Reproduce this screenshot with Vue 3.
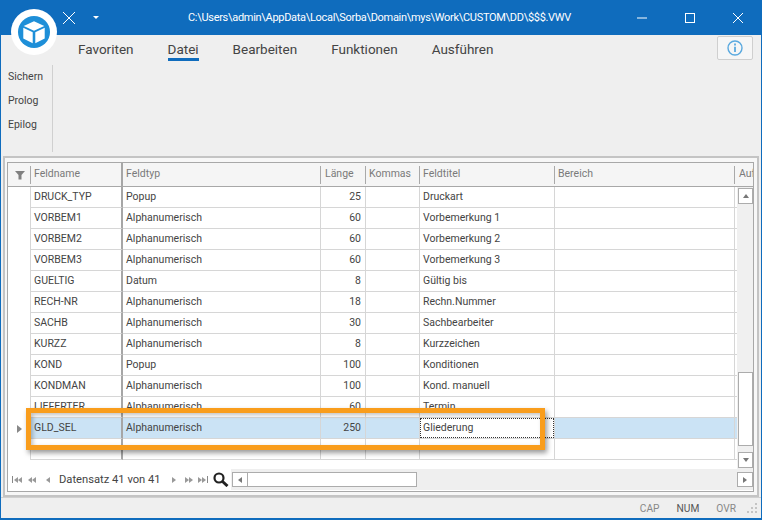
<script setup>
const columns = [
  { key: 'name', label: 'Feldname' },
  { key: 'type', label: 'Feldtyp' },
  { key: 'len', label: 'Länge' },
  { key: 'dec', label: 'Kommas' },
  { key: 'title', label: 'Feldtitel' },
  { key: 'range', label: 'Bereich' },
]

const rows = [
  { name: 'DRUCK_TYP', type: 'Popup', len: 25, title: 'Druckart' },
  { name: 'VORBEM1', type: 'Alphanumerisch', len: 60, title: 'Vorbemerkung 1' },
  { name: 'VORBEM2', type: 'Alphanumerisch', len: 60, title: 'Vorbemerkung 2' },
  { name: 'VORBEM3', type: 'Alphanumerisch', len: 60, title: 'Vorbemerkung 3' },
  { name: 'GUELTIG', type: 'Datum', len: 8, title: 'Gültig bis' },
  { name: 'RECH-NR', type: 'Alphanumerisch', len: 18, title: 'Rechn.Nummer' },
  { name: 'SACHB', type: 'Alphanumerisch', len: 30, title: 'Sachbearbeiter' },
  { name: 'KURZZ', type: 'Alphanumerisch', len: 8, title: 'Kurzzeichen' },
  { name: 'KOND', type: 'Popup', len: 100, title: 'Konditionen' },
  { name: 'KONDMAN', type: 'Alphanumerisch', len: 100, title: 'Kond. manuell' },
  { name: 'LIEFERTER', type: 'Alphanumerisch', len: 60, title: 'Termin' },
  { name: 'GLD_SEL', type: 'Alphanumerisch', len: 250, title: 'Gliederung', selected: true },
  { name: '', type: '', len: '', title: '' },
]

const tabs = ['Favoriten', 'Datei', 'Bearbeiten', 'Funktionen', 'Ausführen']
const sideActions = ['Sichern', 'Prolog', 'Epilog']
</script>

<template>
  <div class="window">
    <header class="titlebar">
      <div class="quick">
        <svg width="14" height="14" viewBox="0 0 14 14">
          <path d="M1 1l12 12M13 1L1 13" stroke="#fff" stroke-width="1" fill="none" />
        </svg>
        <span class="quick-caret"></span>
      </div>
      <div class="path">C:\Users\admin\AppData\Local\Sorba\Domain\mys\Work\CUSTOM\DD\$$$.VWV</div>
      <div class="controls">
        <svg width="10" height="2" viewBox="0 0 10 2"><path d="M0 1h10" stroke="#fff" /></svg>
        <svg width="10" height="10" viewBox="0 0 10 10"><rect x=".5" y=".5" width="9" height="9" fill="none" stroke="#fff" /></svg>
        <svg width="10" height="10" viewBox="0 0 10 10"><path d="M0 0l10 10M10 0L0 10" stroke="#fff" /></svg>
      </div>
    </header>

    <div class="logo">
      <div class="logo-disc">
        <svg width="24" height="24" viewBox="0 0 28 28">
          <path d="M14 1.500L26 7 14 12.500 2 7z" fill="#fff" />
          <path d="M1.500 9l11 5.200V27L1.500 21.500zM26.500 9l-11 5.200V27l11-5.500z" fill="#fff" />
        </svg>
      </div>
    </div>

    <section class="ribbon">
      <nav class="tabs">
        <span v-for="tab in tabs" :key="tab" class="tab" :class="{ active: tab === 'Datei' }">{{ tab }}</span>
        <button class="info">
          <svg width="16" height="16" viewBox="0 0 16 16">
            <circle cx="8" cy="8" r="7" fill="none" stroke="#5aa9df" stroke-width="1.400" />
            <path d="M8 3.500v2M8 6.800v5.200" stroke="#5aa9df" stroke-width="1.800" />
          </svg>
        </button>
      </nav>
      <div class="panel">
        <div class="actions">
          <span v-for="action in sideActions" :key="action">{{ action }}</span>
        </div>
      </div>
    </section>

    <main class="frame">
      <div class="frame-inner">
        <div class="grid-row grid-head">
          <div class="cell indicator">
            <svg width="10" height="10" viewBox="0 0 10 10"><path d="M0 1h10L6.500 5v4.500h-3V5z" fill="#808080" /></svg>
          </div>
          <div v-for="col in columns" :key="col.key" class="cell" :class="col.key">{{ col.label }}</div>
          <div class="cell auto">Auf</div>
        </div>

        <div class="body">
          <div class="rows">
            <div v-for="(row, i) in rows" :key="i" class="grid-row" :class="{ selected: row.selected }">
              <div class="cell indicator"><span v-if="row.selected" class="row-mark"></span></div>
              <div class="cell name">{{ row.name }}</div>
              <div class="cell type">{{ row.type }}</div>
              <div class="cell len">{{ row.len }}</div>
              <div class="cell dec"></div>
              <div class="cell title"><span :class="{ focused: row.selected }">{{ row.title }}</span></div>
              <div class="cell range"></div>
              <div class="cell rest"></div>
            </div>
          </div>
          <div class="vscroll">
            <span class="sbtn"><i class="arrow up"></i></span>
            <div class="vtrack"><div class="vthumb"></div></div>
            <span class="sbtn"><i class="arrow down"></i></span>
          </div>
        </div>

        <div class="foot">
          <div class="pager">
            <span class="pg"><b></b><i class="arrow left"></i><i class="arrow left"></i></span>
            <span class="pg"><i class="arrow left"></i><i class="arrow left"></i></span>
            <span class="pg"><i class="arrow left"></i></span>
            <span class="record">Datensatz 41 von 41</span>
            <span class="pg next"><i class="arrow right"></i></span>
            <span class="pg next"><i class="arrow right"></i><i class="arrow right"></i></span>
            <span class="pg next"><i class="arrow right"></i><i class="arrow right"></i><b></b></span>
            <svg class="lens" width="16" height="15" viewBox="0 0 16 15">
              <circle cx="6" cy="6" r="4.500" fill="none" stroke="#222" stroke-width="2.200" />
              <path d="M9.500 9.500l5 4.500" stroke="#222" stroke-width="3" />
            </svg>
          </div>
          <div class="hscroll">
            <span class="sbtn wide"><i class="arrow left"></i></span>
            <div class="hthumb"></div>
            <div class="htrack"></div>
            <span class="sbtn wide"><i class="arrow right"></i></span>
          </div>
        </div>

        <div class="callout"></div>
      </div>
    </main>

    <footer class="status">
      <span>CAP</span>
      <span class="on">NUM</span>
      <span>OVR</span>
      <svg class="grip" width="10" height="10" viewBox="0 0 10 10">
        <path d="M8 0h2v2H8zM4 4h2v2H4zM8 4h2v2H8zM0 8h2v2H0zM4 8h2v2H4zM8 8h2v2H8z" fill="#c4c4c4" />
      </svg>
    </footer>
  </div>
</template>

<style>
html, body { margin: 0; background: #efefef; }
</style>

<style scoped>
.window {
  position: relative;
  width: 762px;
  height: 520px;
  box-sizing: border-box;
  display: flex;
  flex-direction: column;
  background: #efefef;
  border: 1px solid #0f6cbd;
  border-top: 0;
  border-bottom-width: 2px;
  font-family: Roboto, "Open Sans", sans-serif;
  color: #444;
  overflow: hidden;
}

.titlebar {
  flex: none;
  height: 35px;
  margin: 0 -1px;
  display: flex;
  align-items: center;
  background: #0f6cbd;
  color: #fff;
}
.quick {
  width: 188px;
  padding-left: 62px;
  box-sizing: border-box;
  display: flex;
  align-items: center;
  gap: 17px;
}
.quick-caret {
  width: 0;
  height: 0;
  border: 3px solid transparent;
  border-top: 3px solid #fff;
  margin-top: 3px;
}
.path {
  font-size: 11px;
  letter-spacing: -0.3px;
  white-space: nowrap;
}
.controls {
  margin-left: auto;
  display: flex;
  align-items: center;
  gap: 38px;
  padding-right: 19px;
}

.logo {
  position: absolute;
  left: 10px;
  top: 9px;
  width: 46px;
  height: 46px;
  border-radius: 50%;
  background: #fff;
  display: flex;
  align-items: center;
  justify-content: center;
}
.logo-disc {
  width: 32px;
  height: 32px;
  border-radius: 50%;
  background: #1e8fd8;
  display: flex;
  align-items: center;
  justify-content: center;
}

.ribbon {
  flex: none;
  height: 121px;
}
.tabs {
  height: 30px;
  box-sizing: border-box;
  display: flex;
  align-items: flex-start;
  gap: 34px;
  padding: 5px 0 0 77px;
  font-size: 13.500px;
}
.tab {
  height: 21px;
  box-sizing: border-box;
  line-height: 19px;
}
.tab.active { border-bottom: 3px solid #0f6cbd; }
.info {
  margin: -4px 8px 0 auto;
  width: 36px;
  height: 24px;
  padding: 0;
  display: flex;
  align-items: center;
  justify-content: center;
  background: #f6f6f6;
  border: 1px solid #cfcfcf;
  border-radius: 2px;
}
.panel {
  width: 52px;
  height: 87px;
  box-sizing: border-box;
  border-right: 1px solid #d0d0d0;
}
.actions {
  display: flex;
  flex-direction: column;
  gap: 6px;
  padding: 3px 0 0 7px;
  font-size: 10.500px;
  line-height: 18px;
}

.frame {
  flex: none;
  height: 341px;
  width: 756px;
  margin-left: 2px;
  padding: 4px 3px 3px 2px;
  box-sizing: border-box;
  border: 2px solid #c4c4c4;
  background: #f7f7f7;
}
.frame-inner {
  position: relative;
  height: 100%;
  box-sizing: border-box;
  border: 1px solid #a8a8a8;
  background: #fff;
  display: flex;
  flex-direction: column;
  font-size: 10.500px;
}

.grid-row {
  display: grid;
  grid-template-columns: 23px 92px 198px 45px 54px 135px 180px 2px;
  height: 21px;
}
.cell {
  box-sizing: border-box;
  padding: 0 3px;
  line-height: 20px;
  border-right: 1px solid #d6d6d6;
  border-bottom: 1px solid #d6d6d6;
  white-space: nowrap;
  overflow: hidden;
}
.cell.indicator {
  padding: 0;
  display: flex;
  align-items: center;
  justify-content: center;
  border-bottom: 0;
}
.cell.name { border-right: 2px solid #a6a6a6; }
.cell.len {
  text-align: right;
  padding-right: 4px;
}
.cell.rest {
  padding: 0;
  border-right: 0;
}

.grid-head {
  flex: none;
  height: 23px;
  grid-template-columns: 23px 92px 198px 45px 54px 135px 180px 1fr;
  background: #f5f5f5;
  color: #7a7a7a;
  border-bottom: 1px solid #a8a8a8;
}
.grid-head .cell {
  border-bottom: 0;
  border-right: 0;
  line-height: 22px;
  background: linear-gradient(#a9a9a9, #a9a9a9) right center / 1px 18px no-repeat;
}
.grid-head .cell.name {
  background: none;
  border-right: 2px solid #a6a6a6;
}
.grid-head .cell.len {
  text-align: left;
  padding-left: 4px;
}
.grid-head .cell.auto {
  background: none;
  padding-left: 4px;
}

.body {
  flex: none;
  height: 282px;
  display: flex;
}
.rows {
  width: 729px;
  flex: none;
}

.selected .cell:not(.indicator) { background: #cbe3f5; }
.selected .cell.title { padding: 0; }
.focused {
  display: block;
  height: 20px;
  padding-left: 3px;
  background: #fff;
  outline: 1px dotted #333;
  outline-offset: -1px;
}
.row-mark {
  width: 0;
  height: 0;
  border: 4px solid transparent;
  border-left: 5px solid #888;
  border-right: 0;
}

.vscroll {
  width: 16px;
  flex: none;
  padding: 1px 0 1px 1px;
  box-sizing: border-box;
  display: flex;
  flex-direction: column;
  background: #f0f0f0;
}
.sbtn {
  flex: none;
  box-sizing: border-box;
  width: 15px;
  height: 16px;
  background: #fff;
  border: 1px solid #acacac;
  display: flex;
  align-items: center;
  justify-content: center;
}
.sbtn.wide {
  width: 16px;
  height: 15px;
}
.vtrack {
  flex: 1;
  display: flex;
  flex-direction: column;
  justify-content: flex-end;
  padding-bottom: 6px;
}
.vthumb {
  width: 15px;
  height: 74px;
  box-sizing: border-box;
  background: #fff;
  border: 1px solid #acacac;
}

.arrow {
  display: block;
  width: 0;
  height: 0;
  border: 3px solid transparent;
}
.arrow.up { border-bottom: 4px solid #777; border-top: 0; }
.arrow.down { border-top: 4px solid #777; border-bottom: 0; }
.arrow.left { border-right: 4px solid #777; border-left: 0; }
.arrow.right { border-left: 4px solid #777; border-right: 0; }

.foot {
  flex: none;
  height: 23px;
  display: flex;
  align-items: flex-start;
}
.pager {
  width: 223px;
  height: 21px;
  flex: none;
  display: flex;
  align-items: center;
  box-sizing: border-box;
}
.pg {
  display: flex;
  align-items: center;
  justify-content: center;
  width: 16px;
}
.pg.next { width: 15px; }
.pg .arrow {
  border-top-width: 3.500px;
  border-bottom-width: 3.500px;
}
.pg .arrow.left { border-right-color: #999; }
.pg .arrow.right { border-left-color: #999; }
.pg b {
  width: 1px;
  height: 7px;
  background: #888;
  margin: 0 1px;
}
.record {
  margin: 0 6px 0 3px;
  width: 101px;
  font-size: 11.200px;
  white-space: nowrap;
}
.lens { margin-left: 2px; }
.hscroll {
  flex: 1;
  height: 21px;
  padding: 3px 0 0 1px;
  box-sizing: border-box;
  display: flex;
  align-items: flex-start;
  background: #efefef;
}
.hthumb {
  width: 169px;
  height: 15px;
  box-sizing: border-box;
  border: 1px solid #acacac;
  border-left: 0;
  background: #fff;
}
.htrack { flex: 1; }

.callout {
  position: absolute;
  left: 18px;
  top: 245px;
  width: 519px;
  height: 42px;
  box-sizing: border-box;
  border: 5px solid #f99d1c;
  box-shadow: 2px 3px 5px rgba(0, 0, 0, .4), inset 2px 2px 4px rgba(0, 0, 0, .25);
}

.status {
  flex: none;
  height: 21px;
  display: flex;
  align-items: center;
  justify-content: flex-end;
  gap: 17px;
  padding-right: 4px;
  box-sizing: border-box;
  border-top: 1px solid #d0d0d0;
  font-size: 10.200px;
  color: #888;
}
.status .on { color: #555; }
.grip { margin-left: -6px; }
</style>
